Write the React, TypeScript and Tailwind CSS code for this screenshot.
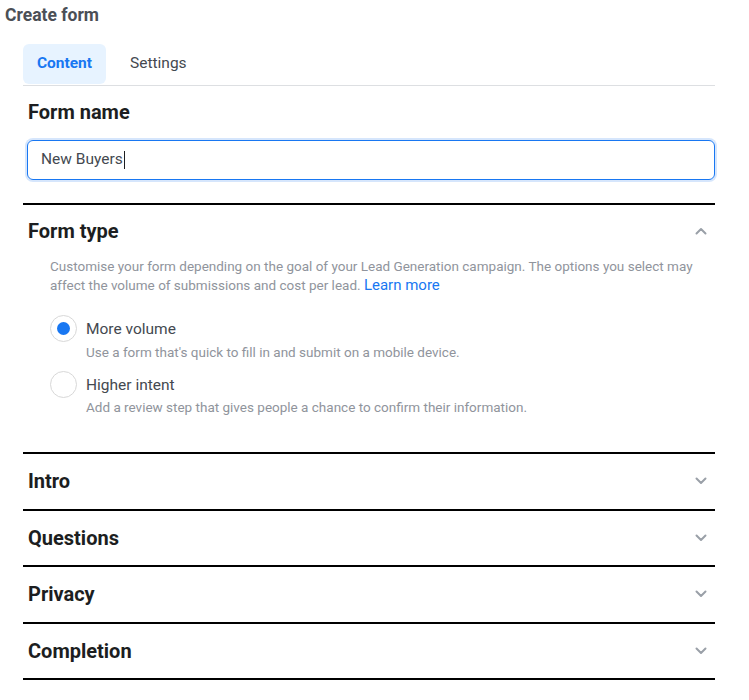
import React from "react";

const Chevron = ({ up }: { up?: boolean }) => (
  <svg width="12" height="8" viewBox="0 0 12 8" className="mr-[8px]">
    <path
      d={up ? "M1.5 6.5 L6 2 L10.5 6.5" : "M1.5 1.5 L6 6 L10.5 1.5"}
      fill="none"
      stroke="#9aa0a8"
      strokeWidth="2"
      strokeLinecap="round"
      strokeLinejoin="round"
    />
  </svg>
);

const Section = ({ title }: { title: string }) => (
  <div className="border-t-2 border-black">
    <div className="h-[54.5px] flex items-center justify-between pl-[5px]">
      <span className="text-[20px] font-bold text-[#1c1e21]">{title}</span>
      <Chevron />
    </div>
  </div>
);

const Radio = ({ checked }: { checked?: boolean }) => (
  <div className="w-[27px] h-[27px] rounded-full border border-[#d8d8d8] flex items-center justify-center shrink-0 bg-white">
    {checked && <div className="w-[13px] h-[13px] rounded-full bg-[#1877f2]" />}
  </div>
);

export default function App() {
  return (
    <div className="w-[749px] h-[700px] bg-white font-['Roboto',sans-serif] text-[#1c1e21]">
      <div className="h-[30px] pl-[5px] flex items-center text-[17.5px] font-bold text-[#4b4f56]">
        Create form
      </div>
      <div className="ml-[23px] w-[692px]">
        <div className="mt-[14px] flex items-end border-b border-[#dddfe2] pb-px">
          <div className="h-[40px] w-[83px] rounded-[6px] bg-[#e7f3ff] flex items-center justify-center text-[15.5px] font-bold text-[#1877f2]">
            Content
          </div>
          <div className="h-[40px] flex items-center ml-[24px] text-[15.5px] text-[#444950]">
            Settings
          </div>
        </div>
        <div className="pt-[14px] pl-[5px] leading-[24px] text-[20px] font-bold">Form name</div>
        <div className="mt-[16px] ml-[4px] h-[40px] w-[688px] rounded-[6px] border border-[#1877f2] ring-2 ring-[#d6e6fc] flex items-center pl-[13px] text-[15.5px] text-[#444950]">
          New Buyers<span className="inline-block w-px h-[18px] bg-[#1c1e21] ml-px" />
        </div>
        <div className="mt-[23px] border-t-2 border-black">
          <div className="h-[52px] flex items-center justify-between pl-[5px]">
            <span className="text-[20px] font-bold">Form type</span>
            <Chevron up />
          </div>
          <div className="pl-[27px] pr-[10px] text-[13.5px] leading-[19px] text-[#90949c]">
            Customise your form depending on the goal of your Lead Generation campaign. The options you select may
            affect the volume of submissions and cost per lead.{" "}
            <span className="text-[#1877f2] text-[15px]">Learn more</span>
          </div>
          <div className="pl-[27px] pt-[24px] pb-[36px] flex flex-col gap-[14px]">
            <div className="flex">
              <div className="-mt-[4px]">
                <Radio checked />
              </div>
              <div className="ml-[9px]">
                <div className="text-[15.5px] leading-[20px] text-[#444950]">More volume</div>
                <div className="mt-[4px] text-[13.5px] leading-[18px] text-[#90949c]">
                  Use a form that's quick to fill in and submit on a mobile device.
                </div>
              </div>
            </div>
            <div className="flex">
              <div className="-mt-[4px]">
                <Radio />
              </div>
              <div className="ml-[9px]">
                <div className="text-[15.5px] leading-[20px] text-[#444950]">Higher intent</div>
                <div className="mt-[3px] text-[13.5px] leading-[18px] text-[#90949c]">
                  Add a review step that gives people a chance to confirm their information.
                </div>
              </div>
            </div>
          </div>
        </div>
        <Section title="Intro" />
        <Section title="Questions" />
        <Section title="Privacy" />
        <Section title="Completion" />
        <div className="border-t-2 border-black" />
      </div>
    </div>
  );
}
